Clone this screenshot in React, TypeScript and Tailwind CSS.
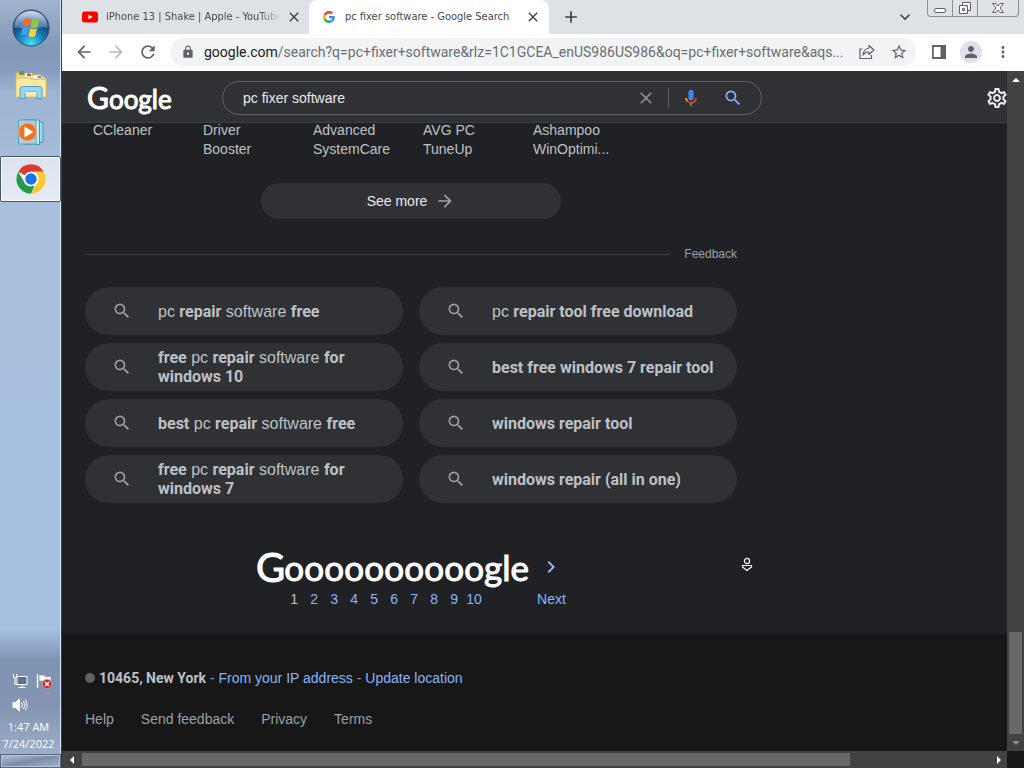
import type { ReactNode } from "react";
import {
  MdArrowBack,
  MdArrowForward,
  MdRefresh,
  MdLock,
  MdSearch,
  MdOutlineSettings,
  MdStarBorder,
  MdClose,
  MdAdd,
  MdMoreVert,
  MdPerson,
  MdKeyboardArrowDown,
  MdChevronRight,
} from "react-icons/md";

const apps = ["CCleaner", "Driver Booster", "Advanced SystemCare", "AVG PC TuneUp", "Ashampoo WinOptimi..."];

const searches: ReactNode[] = [
  <>pc <b>repair</b> software <b>free</b></>,
  <>pc <b>repair tool free download</b></>,
  <><b>free</b> pc <b>repair</b> software <b>for windows 10</b></>,
  <><b>best free windows 7 repair tool</b></>,
  <><b>best</b> pc <b>repair</b> software <b>free</b></>,
  <><b>windows repair tool</b></>,
  <><b>free</b> pc <b>repair</b> software <b>for windows 7</b></>,
  <><b>windows repair (all in one)</b></>,
];

const pages = [1, 2, 3, 4, 5, 6, 7, 8, 9, 10];

function StartOrb() {
  return (
    <svg viewBox="0 0 38 38" className="size-[38px]">
      <defs>
        <radialGradient id="orb" cx="50%" cy="95%" r="85%">
          <stop offset="0" stopColor="#4fe0fb" />
          <stop offset="0.4" stopColor="#1784bd" />
          <stop offset="0.75" stopColor="#17457c" />
          <stop offset="1" stopColor="#41698f" />
        </radialGradient>
        <linearGradient id="orbShine" x1="0" y1="0" x2="0" y2="1">
          <stop offset="0" stopColor="#e3eef7" stopOpacity="0.85" />
          <stop offset="1" stopColor="#a9c4dc" stopOpacity="0.3" />
        </linearGradient>
      </defs>
      <circle cx="19" cy="19" r="18" fill="url(#orb)" stroke="#2a4d74" />
      <path d="M2.500 19C2 9 9.500 2 19 2s17 7 16.500 17c-7-3-12 2-17 2s-9-4-16-2z" fill="url(#orbShine)" />
      <path d="M12.500 10.500c2.200-1.600 4.600-1.600 6.600-.4l-1.800 7.600c-2.200-1-4.400-1-6.600.2z" fill="#ef6b2b" />
      <path d="M20.300 10.600c2.200 1.200 4.600 1.200 7-.2l-1.900 7.500c-2.200 1.300-4.600 1.400-6.900.3z" fill="#93c83d" />
      <path d="M10.400 19.200c2.200-1.200 4.400-1.200 6.600-.2l-1.900 7.500c-2.200-1.100-4.400-1-6.600.2z" fill="#3f9ff0" />
      <path d="M18.200 19.500c2.300 1.100 4.600 1 6.900-.2l-1.900 7.600c-2.300 1.300-4.600 1.300-6.900.1z" fill="#fdd23c" />
    </svg>
  );
}

function FolderIcon() {
  return (
    <svg viewBox="0 0 32 32" className="size-8">
      <path d="M1 3.500h6l1.500 2H25l6 4V28H1z" fill="#f1d67a" stroke="#c8a650" strokeWidth=".8" />
      <path d="M4 2h5v4H4z" fill="#5f9d58" />
      <path d="M10 4h7v4h-7z" fill="#f7f3df" />
      <path d="M12 4.500h4v2.500h-4z" fill="#cf5a42" />
      <path d="M18 6.500h8v3h-8z" fill="#eef4fa" />
      <path d="M23 7h3v2h-3z" fill="#5b8ec9" />
      <path d="M1 9h14l2 1.500h14V28H1z" fill="#fbe99f" stroke="#d9bb62" strokeWidth=".7" />
      <path d="M5 29.500V20q0-2.500 2.500-2.500h17Q27 17.500 27 20v9.500h-5V23H10v6.500z" fill="#9bd5ef" stroke="#4a9fcc" />
      <path d="M10 23h12v2H10z" fill="#d8f2fb" />
    </svg>
  );
}

function PlayerIcon() {
  return (
    <svg viewBox="0 0 32 32" className="size-8">
      <path d="M11 4.500 28 6v20l-17 2z" fill="#9edaea" stroke="#3c98b6" />
      <path d="M9 4h15.500v24.500L9 28z" fill="#c3e9f3" stroke="#3c98b6" />
      <path d="M3.500 4H21v24H3.500z" fill="#a9cfe2" stroke="#5f9db9" />
      <circle cx="12.500" cy="16" r="9" fill="#ea7423" stroke="#f6b07a" />
      <path d="M9.500 10.500 18.500 16l-9 5.500z" fill="#fff" />
    </svg>
  );
}

function ChromeIcon() {
  return (
    <svg viewBox="0 0 48 48" className="size-8">
      <circle cx="24" cy="24" r="22" fill="#fff" />
      <path d="M24 2a22 22 0 0 1 19.050 11H24a11 11 0 0 0-9.530 5.500L4.950 13A22 22 0 0 1 24 2z" fill="#dc3b2e" />
      <path d="M43.050 13A22 22 0 0 1 24 46l9.530-16.500A11 11 0 0 0 33.530 18.500L30 13z" fill="#fcc934" />
      <path d="M24 46A22 22 0 0 1 4.950 13l9.520 16.500A11 11 0 0 0 24 35q3 0 5.500-1.500L24 46z" fill="#259a4b" />
      <circle cx="24" cy="24" r="11" fill="#fff" />
      <circle cx="24" cy="24" r="8.600" fill="#1a73e8" />
    </svg>
  );
}

function NetworkIcon() {
  return (
    <svg viewBox="0 0 16 16" className="size-4" fill="none" stroke="#fff">
      <path d="M5 3.500h10v8H5z" fill="#60718a" />
      <path d="M10 12v2M6.500 14.500h7M1.500 1v3.500h3V1M3 5v6.500h2" />
    </svg>
  );
}

function FlagIcon() {
  return (
    <svg viewBox="0 0 16 16" className="size-4">
      <path d="M1.500 1v14" stroke="#fff" strokeWidth="1.400" />
      <path d="M3 2h5l1.500 1.500H15v6H9L7.500 8H3z" fill="#f4f6f8" stroke="#77859a" strokeWidth=".5" />
      <circle cx="11" cy="11" r="4.700" fill="#d5262c" stroke="#f0c0c0" strokeWidth=".5" />
      <path d="m9 9 4 4m0-4-4 4" stroke="#fff" strokeWidth="1.500" />
    </svg>
  );
}

function SpeakerIcon() {
  return (
    <svg viewBox="0 0 16 16" className="size-4" fill="none" stroke="#fff">
      <path d="M1 5.500h2.500L7.500 2v12l-4-3.500H1z" fill="#fff" />
      <path d="M9.500 5.500q2 2.500 0 5M11.500 4q3 4 0 8M13.300 2.500q3.600 5.500 0 11" />
    </svg>
  );
}

function YouTubeIcon() {
  return (
    <svg viewBox="0 0 16 16" className="size-4 shrink-0">
      <rect y="2.500" width="16" height="11" rx="2.500" fill="#f00" />
      <path d="m6.400 5.700 4.200 2.300-4.200 2.300z" fill="#fff" />
    </svg>
  );
}

function GoogleG() {
  return (
    <svg viewBox="0 0 48 48" className="size-3 shrink-0">
      <path fill="#EA4335" d="M24 9.500c3.540 0 6.710 1.220 9.210 3.600l6.850-6.850C35.900 2.380 30.470 0 24 0 14.620 0 6.510 5.380 2.560 13.220l7.980 6.190C12.430 13.720 17.740 9.500 24 9.500z" />
      <path fill="#4285F4" d="M46.980 24.550c0-1.570-.15-3.090-.38-4.550H24v9.020h12.940c-.58 2.960-2.260 5.480-4.780 7.180l7.730 6c4.510-4.180 7.090-10.360 7.090-17.650z" />
      <path fill="#FBBC05" d="M10.530 28.590A14.500 14.500 0 0 1 9.770 24c0-1.600.27-3.140.76-4.590l-7.980-6.190A24 24 0 0 0 0 24c0 3.880.92 7.540 2.560 10.780z" />
      <path fill="#34A853" d="M24 48c6.480 0 11.930-2.130 15.890-5.810l-7.730-6c-2.150 1.450-4.920 2.300-8.160 2.300-6.260 0-11.570-4.220-13.470-9.910l-7.980 6.190C6.510 42.620 14.620 48 24 48z" />
    </svg>
  );
}

function MicIcon() {
  return (
    <svg viewBox="0 0 24 24" className="size-5">
      <path fill="#4285f4" d="M12 15c1.660 0 3-1.310 3-2.970V5c0-1.660-1.340-3-3-3S9 3.340 9 5v7.030C9 13.690 10.340 15 12 15z" />
      <path fill="#34a853" d="M11 18.100h2V22h-2z" />
      <path fill="#f4b400" d="M7.050 16.870A6.900 6.900 0 0 1 5 12h2a5 5 0 0 0 1.500 3.500z" />
      <path fill="#ea4335" d="M12 16.930a4.970 4.970 0 0 1-3.540-1.430l-1.410 1.370A6.990 6.990 0 0 0 12 19c3.870 0 7-3.130 7-7h-2c0 2.760-2.240 4.930-5 4.930z" />
    </svg>
  );
}

function ShareIcon() {
  return (
    <svg viewBox="0 0 16 16" className="size-4" fill="none" stroke="#5f6368" strokeWidth="1.200">
      <path d="M3.500 5H1v9.500h11.500V11" />
      <path d="M10 1.500 15 6l-5 4.500V8Q6 7.800 4 11q.5-6 6-7z" strokeLinejoin="round" />
    </svg>
  );
}

function Taskbar() {
  return (
    <aside className="flex w-[62px] shrink-0 flex-col items-center border-r border-[#1f4468] bg-[linear-gradient(to_bottom,#a1b3cd_0%,#8499b8_6%,#879cbc_9%,#9db4d3_12%,#a9bfdd_25%,#a5bfdf_82%,#7f93b3_86%,#8395b2_92%,#a4b5cf_100%)] shadow-[inset_-1px_0_0_#cfe3fa]">
      <button aria-label="Start" className="mt-[9px]"><StartOrb /></button>
      <button aria-label="Windows Explorer" className="mt-[22px]"><FolderIcon /></button>
      <button aria-label="Media Player" className="mt-[15px]"><PlayerIcon /></button>
      <button aria-label="Chrome" className="mt-2 flex h-[46px] w-full items-center justify-center rounded-xs border border-[#44556e] bg-linear-to-b from-[#dbe3ef] to-[#e6ebf4] shadow-[inset_0_0_0_1px_#fff]">
        <ChromeIcon />
      </button>
      <div className="mt-auto flex flex-col items-start gap-2 self-start pl-3">
        <div className="flex gap-2">
          <NetworkIcon />
          <FlagIcon />
        </div>
        <SpeakerIcon />
      </div>
      <div className="mt-[5px] w-full pr-1 text-center font-['Open_Sans',sans-serif] text-[11px] leading-[17px] text-white">
        <div>1:47 AM</div>
        <div>7/24/2022</div>
      </div>
      <button aria-label="Show desktop" className="mt-[2px] h-[14px] w-full border border-[#53657f] bg-linear-to-br from-[#b5c3d8] via-[#7e8ea8] to-[#a5b2c6] shadow-[inset_0_0_0_1px_#b6c6dc]" />
    </aside>
  );
}

function TabStrip() {
  return (
    <div className="flex h-[34px] items-start bg-[#dee1e6] font-['DejaVu_Sans_Condensed','DejaVu_Sans',sans-serif] text-[11px] text-[#45494d]">
      <div className="flex h-[34px] w-[247px] items-center pr-[7px] pl-5">
        <YouTubeIcon />
        <span className="ml-2 flex-1 overflow-hidden whitespace-nowrap [mask-image:linear-gradient(to_right,#000_88%,transparent)]">iPhone 13 | Shake | Apple - YouTube</span>
        <button aria-label="Close tab" className="ml-1.5"><MdClose className="size-4 text-[#3c4043]" /></button>
      </div>
      <div className="flex h-[34px] w-60 items-center rounded-t-lg bg-white pr-2 pl-3.5">
        <GoogleG />
        <span className="ml-2.5 flex-1 whitespace-nowrap">pc fixer software - Google Search</span>
        <button aria-label="Close tab"><MdClose className="size-4 text-[#3c4043]" /></button>
      </div>
      <button aria-label="New tab" className="ml-3 flex h-[34px] items-center"><MdAdd className="size-5 text-[#3c4043]" /></button>
      <button aria-label="Search tabs" className="ml-auto flex h-[34px] items-center"><MdKeyboardArrowDown className="size-5 text-[#3c4043]" /></button>
      <div className="mr-[5px] ml-3 flex h-[17px] rounded-b border border-t-0 border-[#8c9198] text-[#5d6167]">
        <button aria-label="Minimize" className="flex w-[25px] items-center justify-center border-r border-[#8c9198]">
          <svg viewBox="0 0 14 14" className="size-3.5" fill="#fff" stroke="currentColor"><rect x="1.500" y="7.500" width="11" height="4" rx="1.500" /></svg>
        </button>
        <button aria-label="Restore" className="flex w-[25px] items-center justify-center border-r border-[#8c9198]">
          <svg viewBox="0 0 14 14" className="size-3.5" fill="#fff" stroke="currentColor"><path d="M4.500 1.500h8v8h-8z" /><path d="M1.500 4.500h8v8h-8z" /><path d="M4.500 7.500h2v2h-2z" /></svg>
        </button>
        <button aria-label="Close" className="flex w-10 items-center justify-center">
          <svg viewBox="0 0 14 14" className="size-3.5" fill="#fff" stroke="currentColor"><path d="M1.500 2.500h3.500L7 5l2-2.500h3.500L9 7l3.500 4.500H9L7 9l-2 2.500H1.500L5 7z" /></svg>
        </button>
      </div>
    </div>
  );
}

function Toolbar() {
  return (
    <div className="flex h-[37px] items-center bg-white pr-3 pb-px pl-3 text-[#5f6368]">
      <div className="flex items-center gap-3">
        <button aria-label="Back"><MdArrowBack className="size-5" /></button>
        <button aria-label="Forward"><MdArrowForward className="size-5 text-[#babcbe]" /></button>
        <button aria-label="Reload"><MdRefresh className="size-5" /></button>
      </div>
      <div className="ml-3 flex h-7 min-w-0 flex-1 items-center rounded-full bg-[#f1f3f4] pr-2 pl-[11px]">
        <MdLock className="size-[14px] shrink-0" />
        <div className="ml-[9px] min-w-0 flex-1 overflow-hidden font-['Roboto',sans-serif] text-[14px] whitespace-nowrap text-[#6a6e73]">
          <span className="text-[#202124]">google.com</span>/search?q=pc+fixer+software&amp;rlz=1C1GCEA_enUS986US986&amp;oq=pc+fixer+software&amp;aqs...
        </div>
        <button aria-label="Share" className="ml-3"><ShareIcon /></button>
        <button aria-label="Bookmark" className="ml-[15px]"><MdStarBorder className="size-[18px]" /></button>
      </div>
      <button aria-label="Side panel" className="ml-4">
        <svg viewBox="0 0 14 14" className="size-3.5"><path d="M0 0h14v14H0z" fill="currentColor" /><path d="M1.800 2h6.700v10H1.800z" fill="#fff" /></svg>
      </button>
      <button aria-label="Profile" className="ml-3.5 flex size-[22px] items-center justify-center rounded-full bg-[#dfe0ea]"><MdPerson className="size-[18px]" /></button>
      <button aria-label="Menu" className="ml-3"><MdMoreVert className="size-[18px]" /></button>
    </div>
  );
}

function Header() {
  return (
    <header className="relative flex h-[52px] shrink-0 items-center border-b border-[#3c4043] bg-[#303134] pt-[3px] pl-[25px]">
      <a href="#home" aria-label="Google" className="w-[135px] font-['Lato',sans-serif] text-[26px] leading-[34px] text-white [-webkit-text-stroke:1px_#fff]">
        <span className="text-[30px]">G</span>oogle
      </a>
      <form className="flex h-[34px] w-full max-w-[540px] items-center rounded-full border border-[#5f6368] pr-[18px] pl-5">
        <input aria-label="Search" defaultValue="pc fixer software" className="min-w-0 flex-1 bg-transparent text-[14px] text-[#e8eaed] outline-none" />
        <button type="button" aria-label="Clear"><MdClose className="size-5 text-[#8b9095]" /></button>
        <span className="ml-3 h-5 w-px bg-[#5f6368]" />
        <button type="button" aria-label="Search by voice" className="ml-3"><MicIcon /></button>
        <button type="button" aria-label="Search" className="ml-[22px]"><MdSearch className="size-5 text-[#8ab4f8]" /></button>
      </form>
      <button aria-label="Settings" className="-mr-0.5 ml-auto"><MdOutlineSettings className="size-6 text-[#e8eaed]" /></button>
    </header>
  );
}

function Pagination() {
  return (
    <nav aria-label="Pages" className="mt-[45px] flex justify-center text-[#8ab4f8]">
      <div className="w-7 text-center font-['Lato',sans-serif] text-[40px] leading-[38px] text-white [-webkit-text-stroke:1px_#fff]">G</div>
      {pages.map((n) => (
        <a key={n} href={`#page${n}`} className="flex w-5 flex-col items-center gap-1 text-[14px] leading-[18px]">
          <span className="font-['Lato',sans-serif] text-[35px] leading-[38px] text-white [-webkit-text-stroke:1px_#fff]">o</span>
          <span className={n === 1 ? "text-[#bdc1c6]" : ""}>{n}</span>
        </a>
      ))}
      <div className="w-[53px] font-['Lato',sans-serif] text-[35px] leading-[38px] text-white [-webkit-text-stroke:1px_#fff]">gle</div>
      <a href="#next" className="flex flex-col items-center gap-1 text-[14px] leading-[18px]">
        <span className="flex h-[38px] items-center"><MdChevronRight className="size-6" /></span>
        <span>Next</span>
      </a>
    </nav>
  );
}

function Results() {
  return (
    <main className="-mt-0.5 flex-1 px-[23px] text-[#bdc1c6]">
      <div className="w-full max-w-[652px]">
        <ul className="flex gap-[30px] pl-2 text-[14px] leading-[19px]">
          {apps.map((name) => (
            <li key={name} className="w-20"><a href="#app">{name}</a></li>
          ))}
        </ul>
        <button className="mx-auto mt-6 flex h-9 w-[300px] items-center justify-center gap-2 rounded-full bg-[#303134] text-[14px] text-[#e8eaed]">
          See more <MdArrowForward className="size-5 text-[#9aa0a6]" />
        </button>
        <div className="mt-[26px] flex items-center gap-3.5 text-[12px] leading-[18px] text-[#9aa0a6]">
          <hr className="flex-1 border-[#3c4043]" />
          <a href="#feedback">Feedback</a>
        </div>
        <div className="mt-6 grid grid-cols-2 gap-x-4 gap-y-2">
          {searches.map((label, i) => (
            <a key={i} href="#search" className="flex h-12 items-center rounded-full bg-[#303134] pr-5 pl-[27px] text-[16px] leading-[19px] [&_b]:font-['Roboto',sans-serif] [&_b]:font-bold">
              <MdSearch className="size-5 shrink-0 text-[#9aa0a6]" />
              <span className="ml-[26px]">{label}</span>
            </a>
          ))}
        </div>
        <Pagination />
      </div>
    </main>
  );
}

function Footer() {
  return (
    <footer className="flex h-[117px] shrink-0 flex-col gap-[23px] bg-[#171717] px-[23px] pt-[35px] text-[14px] leading-[18px] text-[#9aa0a6]">
      <div className="flex items-center gap-1">
        <span className="size-2.5 rounded-full bg-[#5f6062]" />
        <p>
          <b className="font-['Roboto',sans-serif] text-[#bdc1c6]">10465, New York</b> - <a href="#ip" className="text-[#8ab4f8]">From your IP address</a> - <a href="#update" className="text-[#8ab4f8]">Update location</a>
        </p>
      </div>
      <nav className="flex gap-[27px]">
        <a href="#help">Help</a>
        <a href="#send">Send feedback</a>
        <a href="#privacy">Privacy</a>
        <a href="#terms">Terms</a>
      </nav>
    </footer>
  );
}

function VerticalScrollbar() {
  return (
    <div className="flex w-[17px] shrink-0 flex-col items-center bg-[#424242]">
      <button aria-label="Scroll up" className="flex h-[17px] items-center"><svg viewBox="0 0 8 4" className="h-1 w-2"><path d="M0 4 4 0l4 4z" fill="#fff" /></svg></button>
      <div className="mt-auto h-[102px] w-[13px] bg-[#686868]" />
      <button aria-label="Scroll down" className="flex h-[17px] items-center"><svg viewBox="0 0 8 4" className="h-1 w-2"><path d="m0 0 4 4 4-4z" fill="#8a8a8a" /></svg></button>
    </div>
  );
}

function HorizontalScrollbar() {
  return (
    <div className="flex h-[17px] shrink-0 bg-[#171717]">
      <div className="flex flex-1 items-center bg-[#424242]">
        <button aria-label="Scroll left" className="flex w-5 justify-center"><svg viewBox="0 0 4 8" className="h-2 w-1"><path d="M4 0 0 4l4 4z" fill="#fff" /></svg></button>
        <div className="h-[13px] w-[85%] max-w-[768px] bg-[#686868]" />
        <button aria-label="Scroll right" className="ml-auto flex w-[17px] justify-center"><svg viewBox="0 0 4 8" className="h-2 w-1"><path d="m0 0 4 4-4 4z" fill="#fff" /></svg></button>
      </div>
      <div className="w-[17px]" />
    </div>
  );
}

export default function App() {
  return (
    <div className="relative flex min-h-screen w-full bg-[#202124] font-['Liberation_Sans',sans-serif]">
      <Taskbar />
      <div className="flex min-w-0 flex-1 flex-col">
        <TabStrip />
        <Toolbar />
        <div className="flex flex-1">
          <div className="flex min-w-0 flex-1 flex-col">
            <Header />
            <Results />
            <Footer />
          </div>
          <VerticalScrollbar />
        </div>
        <HorizontalScrollbar />
      </div>
      <svg viewBox="0 0 12 16" className="absolute top-[557px] left-[741px] h-4 w-3" fill="#202124" stroke="#fff" strokeWidth="1.200">
        <circle cx="6" cy="4" r="2.600" />
        <path d="M1.500 8.500h9v1.500L6 13.500 1.500 10z" />
      </svg>
    </div>
  );
}
